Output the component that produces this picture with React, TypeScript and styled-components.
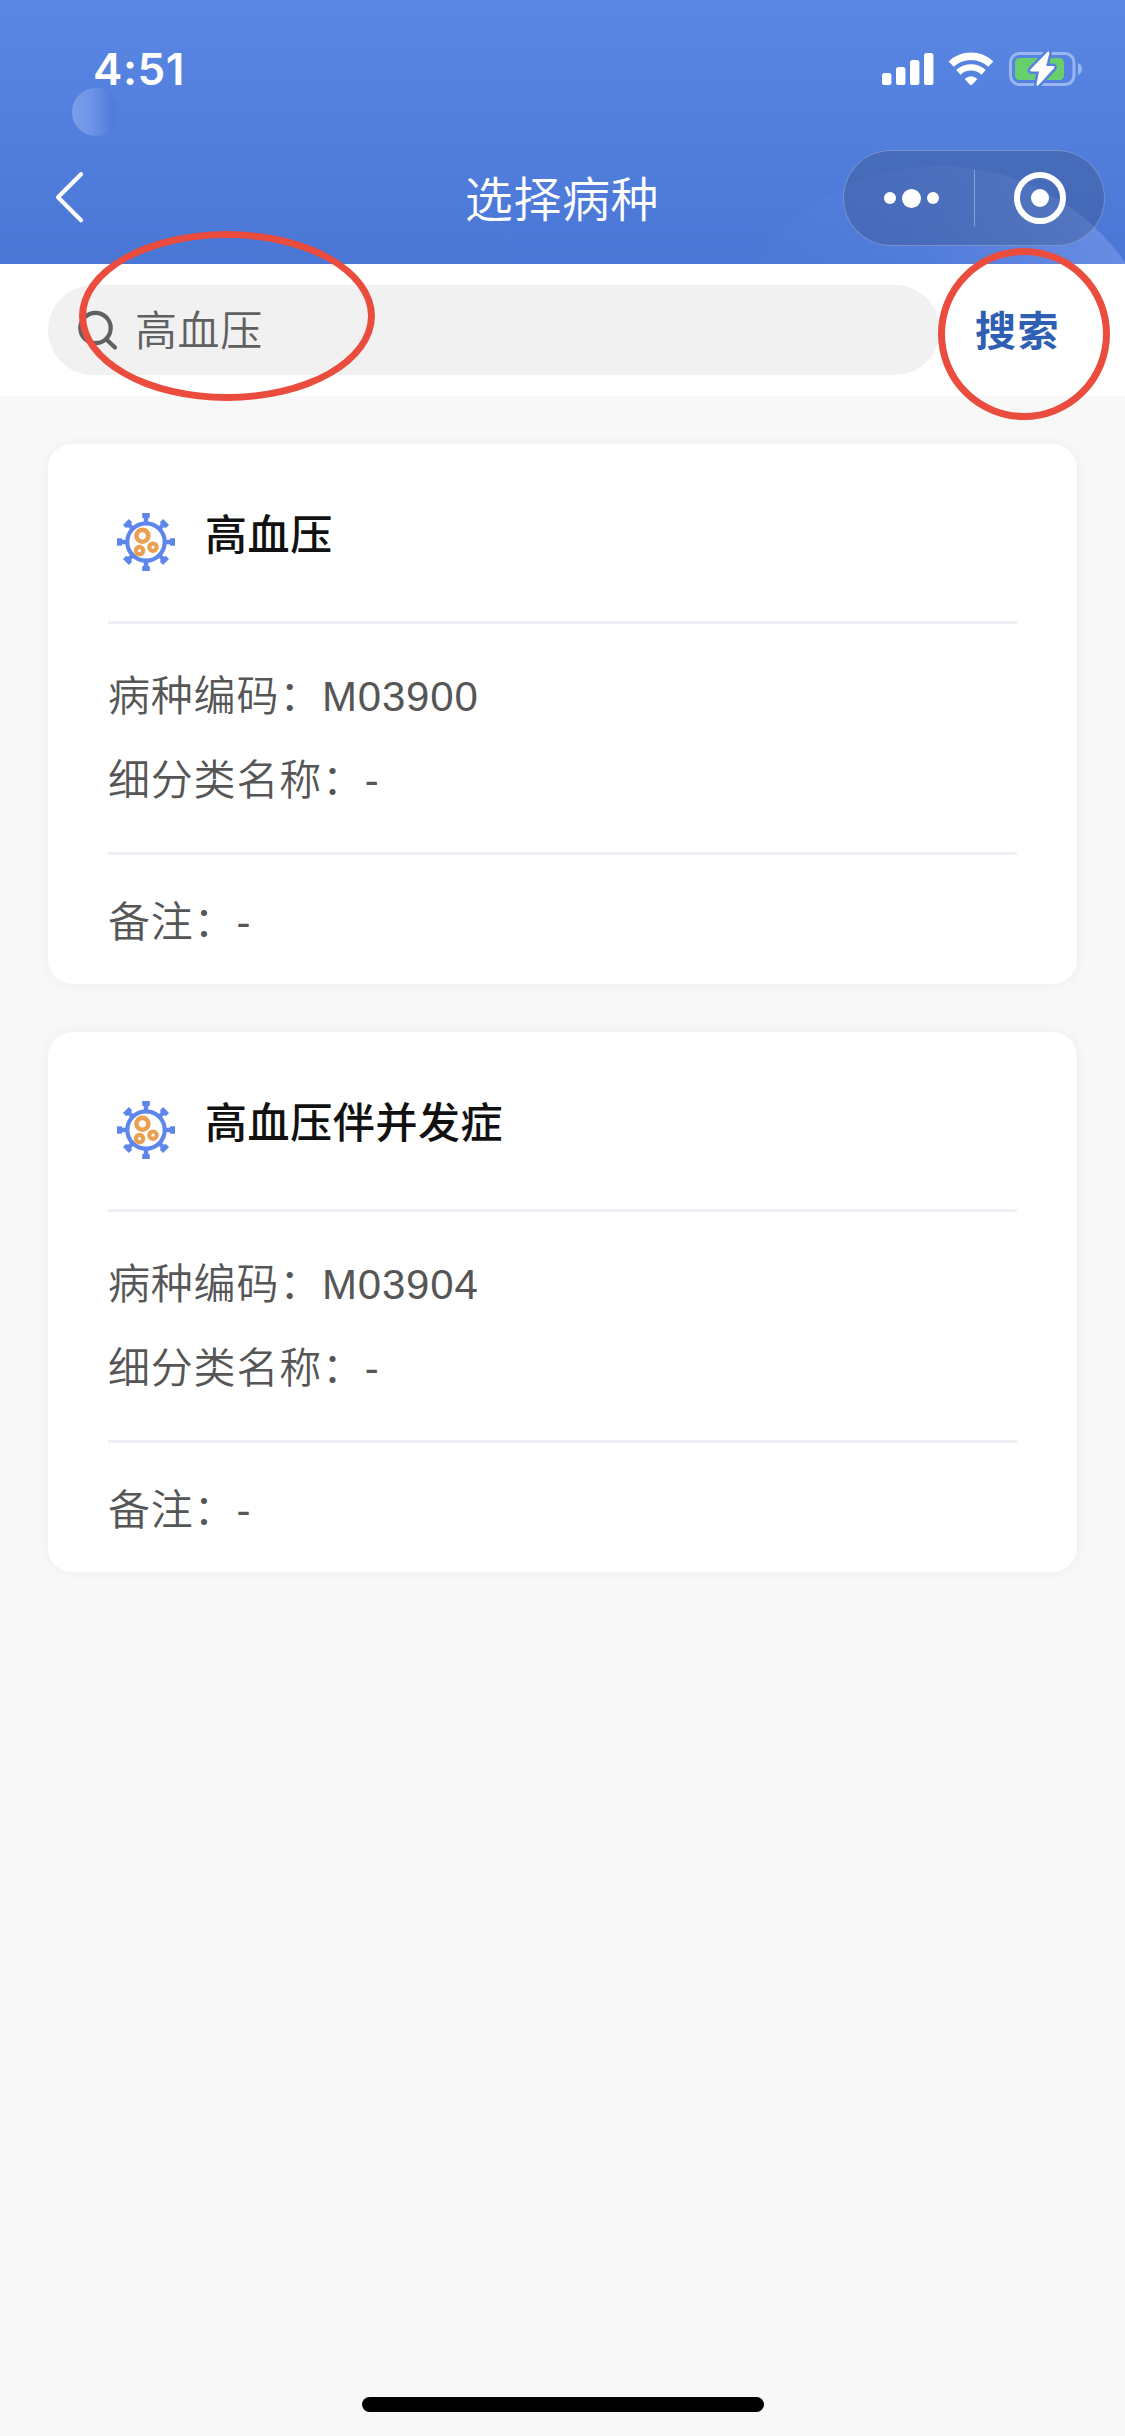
import React from "react";
import styled, { createGlobalStyle } from "styled-components";

const GlobalStyle = createGlobalStyle`
  *, *::before, *::after { box-sizing: border-box; }
  body {
    margin: 0;
    background: #f8f8f8;
    font-family: "Liberation Sans", "Noto Sans CJK SC", sans-serif;
  }
`;

const Screen = styled.div`
  position: relative;
  width: 1125px;
  height: 2436px;
  display: flex;
  flex-direction: column;
  overflow: hidden;
  background: #f8f8f8;
`;

const Header = styled.header`
  position: relative;
  height: 264px;
  flex: none;
  overflow: hidden;
  color: #fff;
  background: linear-gradient(180deg, #5a87e4 0%, #4a76d5 100%);
`;

const Bubble = styled.span<{ $x: number; $y: number; $size: number; $fill: string }>`
  position: absolute;
  left: ${(p) => p.$x}px;
  top: ${(p) => p.$y}px;
  width: ${(p) => p.$size}px;
  height: ${(p) => p.$size}px;
  border-radius: 50%;
  background: ${(p) => p.$fill};
`;

const StatusBar = styled.div`
  position: relative;
  height: 138px;
  padding: 0 42px 0 93px;
  display: flex;
  align-items: center;
  justify-content: space-between;
`;

const Clock = styled.span`
  font-family: Inter, "Liberation Sans", sans-serif;
  font-size: 44px;
  font-weight: 600;
  line-height: 60px;
  letter-spacing: 0.6px;
`;

const StatusIcons = styled.div`
  display: flex;
  align-items: center;
  gap: 14px;

  svg { display: block; }
`;

const NavBar = styled.div`
  position: relative;
  height: 120px;
  padding: 0 20px 0 52px;
  display: grid;
  grid-template-columns: 262px 1fr 262px;
  align-items: center;
`;

const BackButton = styled.button`
  width: 36px;
  height: 56px;
  padding: 0;
  border: 0;
  background: none;
  color: inherit;

  svg { display: block; }
`;

const NavTitle = styled.h1`
  margin: 0 0 0 -33px;
  padding-top: 5px;
  text-align: center;
  font-size: 48px;
  font-weight: 350;
  line-height: 60px;
  letter-spacing: 0.6px;
`;

const Capsule = styled.div`
  width: 262px;
  height: 96px;
  border: 1px solid rgba(255, 255, 255, 0.25);
  border-radius: 48px;
  background: rgba(52, 76, 122, 0.34);
  display: grid;
  grid-template-columns: 130px 1px 1fr;
  align-items: center;
  justify-items: center;
`;

const CapsuleDivider = styled.span`
  width: 1px;
  height: 56px;
  background: rgba(255, 255, 255, 0.35);
`;

const Dots = styled.span`
  display: flex;
  align-items: center;
  gap: 6px;
  padding-left: 5px;
`;

const Dot = styled.span<{ $size: number }>`
  width: ${(p) => p.$size}px;
  height: ${(p) => p.$size}px;
  border-radius: 50%;
  background: #fff;
`;

const Target = styled.span`
  width: 52px;
  height: 52px;
  border: 6px solid #fff;
  border-radius: 50%;
  display: flex;
  align-items: center;
  justify-content: center;
`;

const SearchBar = styled.form`
  height: 132px;
  flex: none;
  padding: 0 48px;
  display: flex;
  align-items: center;
  background: #fff;
`;

const SearchField = styled.label`
  width: 892px;
  height: 90px;
  padding-left: 30px;
  border-radius: 45px;
  display: flex;
  align-items: center;
  gap: 16px;
  color: #5f6062;
  background: #f1f1f1;
`;

const SearchText = styled.span`
  padding-top: 4px;
  font-size: 42px;
  line-height: 60px;
  letter-spacing: 0.6px;
  font-weight: 350;
`;

const SearchButton = styled.button`
  margin-left: 35px;
  padding: 4px 0 0;
  border: 0;
  background: none;
  color: #2f5fb3;
  font: 700 41px/60px "Liberation Sans", "Noto Sans CJK SC", sans-serif;
  letter-spacing: 1.4px;
`;

const List = styled.main`
  padding: 48px;
  display: flex;
  flex-direction: column;
  gap: 48px;
`;

const Card = styled.article`
  height: 540px;
  padding: 0 60px;
  border-radius: 24px;
  background: #fff;
  box-shadow: 0 0 12px rgba(0, 0, 0, 0.05);
`;

const CardHead = styled.div`
  height: 180px;
  padding: 68.5px 0 0 8.5px;
  display: flex;
  align-items: flex-start;
  gap: 30.5px;
  border-bottom: 3px solid #eeeff5;

  svg { display: block; flex: none; }
`;

const CardTitle = styled.h2`
  margin: -6.5px 0 0;
  color: #111;
  font-size: 42px;
  font-weight: 500;
  line-height: 60px;
  letter-spacing: 0.6px;
`;

const CardBody = styled.div`
  height: 231px;
  padding-top: 43px;
  display: flex;
  flex-direction: column;
  gap: 24px;
  border-bottom: 3px solid #eeeff5;
`;

const CardFoot = styled.div`
  padding-top: 38px;
`;

const Field = styled.p`
  margin: 0;
  color: #565656;
  font-size: 42px;
  font-weight: 400;
  line-height: 60px;
  letter-spacing: 0.8px;
`;

const FieldLabel = styled.span`
  font-weight: 350;
`;

const Mark = styled.span<{ $x: number; $y: number; $w: number; $h: number }>`
  position: absolute;
  left: ${(p) => p.$x}px;
  top: ${(p) => p.$y}px;
  width: ${(p) => p.$w}px;
  height: ${(p) => p.$h}px;
  border: 7px solid #ea4d3d;
  border-radius: 50%;
`;

const HomeIndicator = styled.div`
  width: 402px;
  height: 15px;
  margin: auto auto 24px;
  flex: none;
  border-radius: 8px;
  background: #000;
`;

const Signal = () => (
  <svg width="52" height="34" viewBox="0 0 52 34" fill="#fff">
    <rect x="0" y="21" width="9.4" height="12" rx="2.6" />
    <rect x="14" y="15" width="9.4" height="18" rx="2.6" />
    <rect x="28" y="8" width="9.4" height="25" rx="2.6" />
    <rect x="42" y="1" width="9.4" height="32" rx="2.6" />
  </svg>
);

const Wifi = () => (
  <svg width="47" height="34" viewBox="0 0 47 34" fill="none" stroke="#fff">
    <path d="M3.2 12.2A28.6 28.6 0 0 1 42.8 12.2" strokeWidth="7.4" />
    <path d="M10.4 20.4A18.2 18.2 0 0 1 35.6 20.4" strokeWidth="6.4" />
    <path d="M16.6 27Q23 21.4 29.4 27L24.2 32.4Q23 33.6 21.8 32.4Z" fill="#fff" stroke="none" />
  </svg>
);

const BOLT = "M38.6 .8L21.4 18.6Q20.4 20.4 22.4 20.4H30L27.4 33.4Q27.6 35.6 29.4 34.2L45.2 17Q46 15.2 44.4 15H37.2L40.4 2.2Q40.4 0 38.6 .8Z";

const Battery = () => (
  <svg width="74" height="36" viewBox="0 0 74 36" fill="none">
    <rect x="1.5" y="2.5" width="63.5" height="31" rx="9" stroke="#9bb6ef" strokeWidth="3" />
    <path d="M69 12Q73 14 73 18T69 24Z" fill="#9bb6ef" />
    <rect x="6" y="7" width="49" height="22" rx="4.5" fill="#67cf6b" />
    <path d={BOLT} fill="#5682df" stroke="#5682df" strokeWidth="5" strokeLinejoin="round" />
    <path d={BOLT} fill="#fff" />
  </svg>
);

const ChevronLeft = () => (
  <svg width="36" height="56" viewBox="0 0 36 56" fill="none" stroke="#fff" strokeWidth="4.2" strokeLinecap="round" strokeLinejoin="round">
    <path d="M29 4.2L6 27.2L29 50.2" />
  </svg>
);

const Magnifier = () => (
  <svg width="41" height="42" viewBox="0 0 41 42" fill="none" stroke="currentColor" strokeWidth="4.2" strokeLinecap="round">
    <circle cx="17.5" cy="19" r="15.2" />
    <path d="M28.5 30.5L37 38.5" />
  </svg>
);

const SPIKES = [0, 45, 90, 135, 180, 225, 270, 315];

const VirusIcon = () => (
  <svg width="58" height="58" viewBox="-29 -29 58 58" fill="none">
    {SPIKES.map((angle) => (
      <path
        key={angle}
        transform={`rotate(${angle})`}
        d={angle % 90 ? "M-4.2 -28.4V-24L-2.2 -23V-18H2.2V-23L4.2 -24V-28.4Z" : "M-3.8 -29V-24.4L-2.2 -23.6V-18H2.2V-23.6L3.8 -24.4V-29Z"}
        fill="#5f86ea"
      />
    ))}
    <circle r="18.7" stroke="#5f86ea" strokeWidth="4.2" />
    <g stroke="#eb9f50">
      <circle cx="-3.6" cy="-6.2" r="5.9" strokeWidth="4.6" />
      <circle cx="7" cy="5.2" r="3.7" strokeWidth="4.2" />
      <circle cx="-6.5" cy="8.6" r="3.7" strokeWidth="4.2" />
    </g>
  </svg>
);

const diseases = [
  { name: "高血压", code: "M03900", subtype: "-", note: "-" },
  { name: "高血压伴并发症", code: "M03904", subtype: "-", note: "-" },
];

export default function App() {
  return (
    <Screen>
      <GlobalStyle />
      <Header>
        <Bubble $x={72} $y={88} $size={48} $fill="linear-gradient(90deg, #7b9de9 0%, #6f94e7 40%, #4f7bda 85%, #517edb 100%)" />
        <Bubble $x={714} $y={166} $size={452} $fill="linear-gradient(90deg, rgba(110,148,240,0) 0%, rgba(110,148,240,.2) 45%, rgba(130,160,240,.6) 100%)" />
        <StatusBar>
          <Clock>4:51</Clock>
          <StatusIcons>
            <Signal />
            <Wifi />
            <Battery />
          </StatusIcons>
        </StatusBar>
        <NavBar>
          <BackButton aria-label="返回"><ChevronLeft /></BackButton>
          <NavTitle>选择病种</NavTitle>
          <Capsule>
            <Dots>
              <Dot $size={12} />
              <Dot $size={19} />
              <Dot $size={12} />
            </Dots>
            <CapsuleDivider />
            <Target><Dot $size={18} /></Target>
          </Capsule>
        </NavBar>
      </Header>

      <SearchBar>
        <SearchField>
          <Magnifier />
          <SearchText>高血压</SearchText>
        </SearchField>
        <SearchButton type="button">搜索</SearchButton>
      </SearchBar>

      <List>
        {diseases.map((item) => (
          <Card key={item.code}>
            <CardHead>
              <VirusIcon />
              <CardTitle>{item.name}</CardTitle>
            </CardHead>
            <CardBody>
              <Field><FieldLabel>病种编码：</FieldLabel>{item.code}</Field>
              <Field><FieldLabel>细分类名称：</FieldLabel>{item.subtype}</Field>
            </CardBody>
            <CardFoot>
              <Field><FieldLabel>备注：</FieldLabel>{item.note}</Field>
            </CardFoot>
          </Card>
        ))}
      </List>

      <HomeIndicator />
      <Mark $x={79} $y={231} $w={296} $h={170} />
      <Mark $x={938} $y={248} $w={172} $h={172} />
    </Screen>
  );
}
